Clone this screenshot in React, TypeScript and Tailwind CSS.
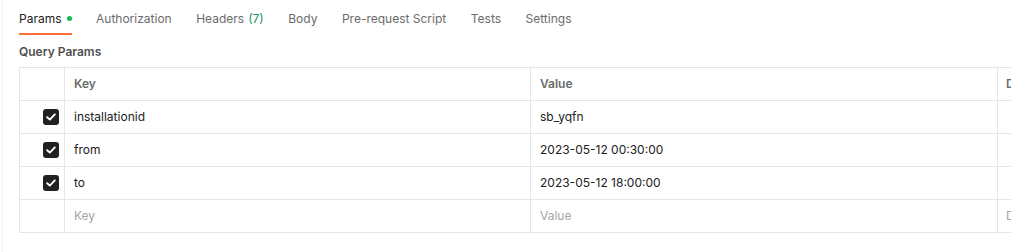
import React from "react";

const tabs = [
  { label: "Params", active: true, dot: true },
  { label: "Authorization" },
  { label: "Headers", count: "(7)" },
  { label: "Body" },
  { label: "Pre-request Script" },
  { label: "Tests" },
  { label: "Settings" },
];

const rows = [
  { key: "installationid", value: "sb_yqfn" },
  { key: "from", value: "2023-05-12 00:30:00" },
  { key: "to", value: "2023-05-12 18:00:00" },
];

function Check() {
  return (
    <div className="w-[16px] h-[16px] rounded-[3px] bg-[#212121] flex items-center justify-center">
      <svg width="10" height="8" viewBox="0 0 10 8" fill="none">
        <path d="M1.2 4.2 L3.8 6.6 L8.8 1.4" stroke="#ffffff" strokeWidth="1.9" strokeLinecap="round" strokeLinejoin="round" />
      </svg>
    </div>
  );
}

const cell = "h-[33px] flex items-center border-b border-[#e6e6e6]";

export default function App() {
  return (
    <div
      className="w-[1011px] h-[252px] bg-white overflow-hidden flex"
      style={{ fontFamily: "Inter, 'Noto Sans', sans-serif" }}
    >
      <div className="w-[2px] shrink-0" />
      <div className="w-[1px] shrink-0 bg-[#f0f0f0]" />
      <div className="flex-1 pl-[16px] min-w-0">
        <div className="flex gap-[24.5px] h-[35px] items-stretch text-[12px]">
          {tabs.map((t) => (
            <div
              key={t.label}
              className={
                "flex items-center gap-[4px] border-b-2 pt-[4px] " +
                (t.active ? "border-[#ff6c37] text-[#212121]" : "border-transparent text-[#6b6b6b]")
              }
            >
              <span>{t.label}</span>
              {t.count && <span className="text-[#1a8f68]">{t.count}</span>}
              {t.dot && <span className="w-[5px] h-[5px] rounded-full bg-[#0cbb52] ml-[1px]" />}
            </div>
          ))}
        </div>
        <div className="h-[32px] flex items-center text-[12px] font-semibold text-[#505050] pt-[2px]">
          Query Params
        </div>
        <div className="flex border-t border-l border-[#e6e6e6] text-[12px] w-[1100px]">
          <div className="w-[45px] shrink-0 border-r border-[#e6e6e6]">
            <div className={cell} />
            {rows.map((r) => (
              <div key={r.key} className={cell + " justify-end pr-[5px]"}>
                <Check />
              </div>
            ))}
            <div className={cell} />
          </div>
          <div className="w-[466px] shrink-0 border-r border-[#e6e6e6]">
            <div className={cell + " pl-[9px] font-semibold text-[#6b6b6b]"}>Key</div>
            {rows.map((r) => (
              <div key={r.key} className={cell + " pl-[9px] text-[#212121]"}>
                {r.key}
              </div>
            ))}
            <div className={cell + " pl-[9px] text-[#a6a6a6]"}>Key</div>
          </div>
          <div className="w-[467px] shrink-0 border-r border-[#e6e6e6]">
            <div className={cell + " pl-[9px] font-semibold text-[#6b6b6b]"}>Value</div>
            {rows.map((r) => (
              <div key={r.key} className={cell + " pl-[9px] text-[#212121]"}>
                {r.value}
              </div>
            ))}
            <div className={cell + " pl-[9px] text-[#a6a6a6]"}>Value</div>
          </div>
          <div className="flex-1">
            <div className={cell + " pl-[8px] font-semibold text-[#6b6b6b]"}>Description</div>
            {rows.map((r) => (
              <div key={r.key} className={cell} />
            ))}
            <div className={cell + " pl-[8px] text-[#a6a6a6]"}>Description</div>
          </div>
        </div>
      </div>
    </div>
  );
}
